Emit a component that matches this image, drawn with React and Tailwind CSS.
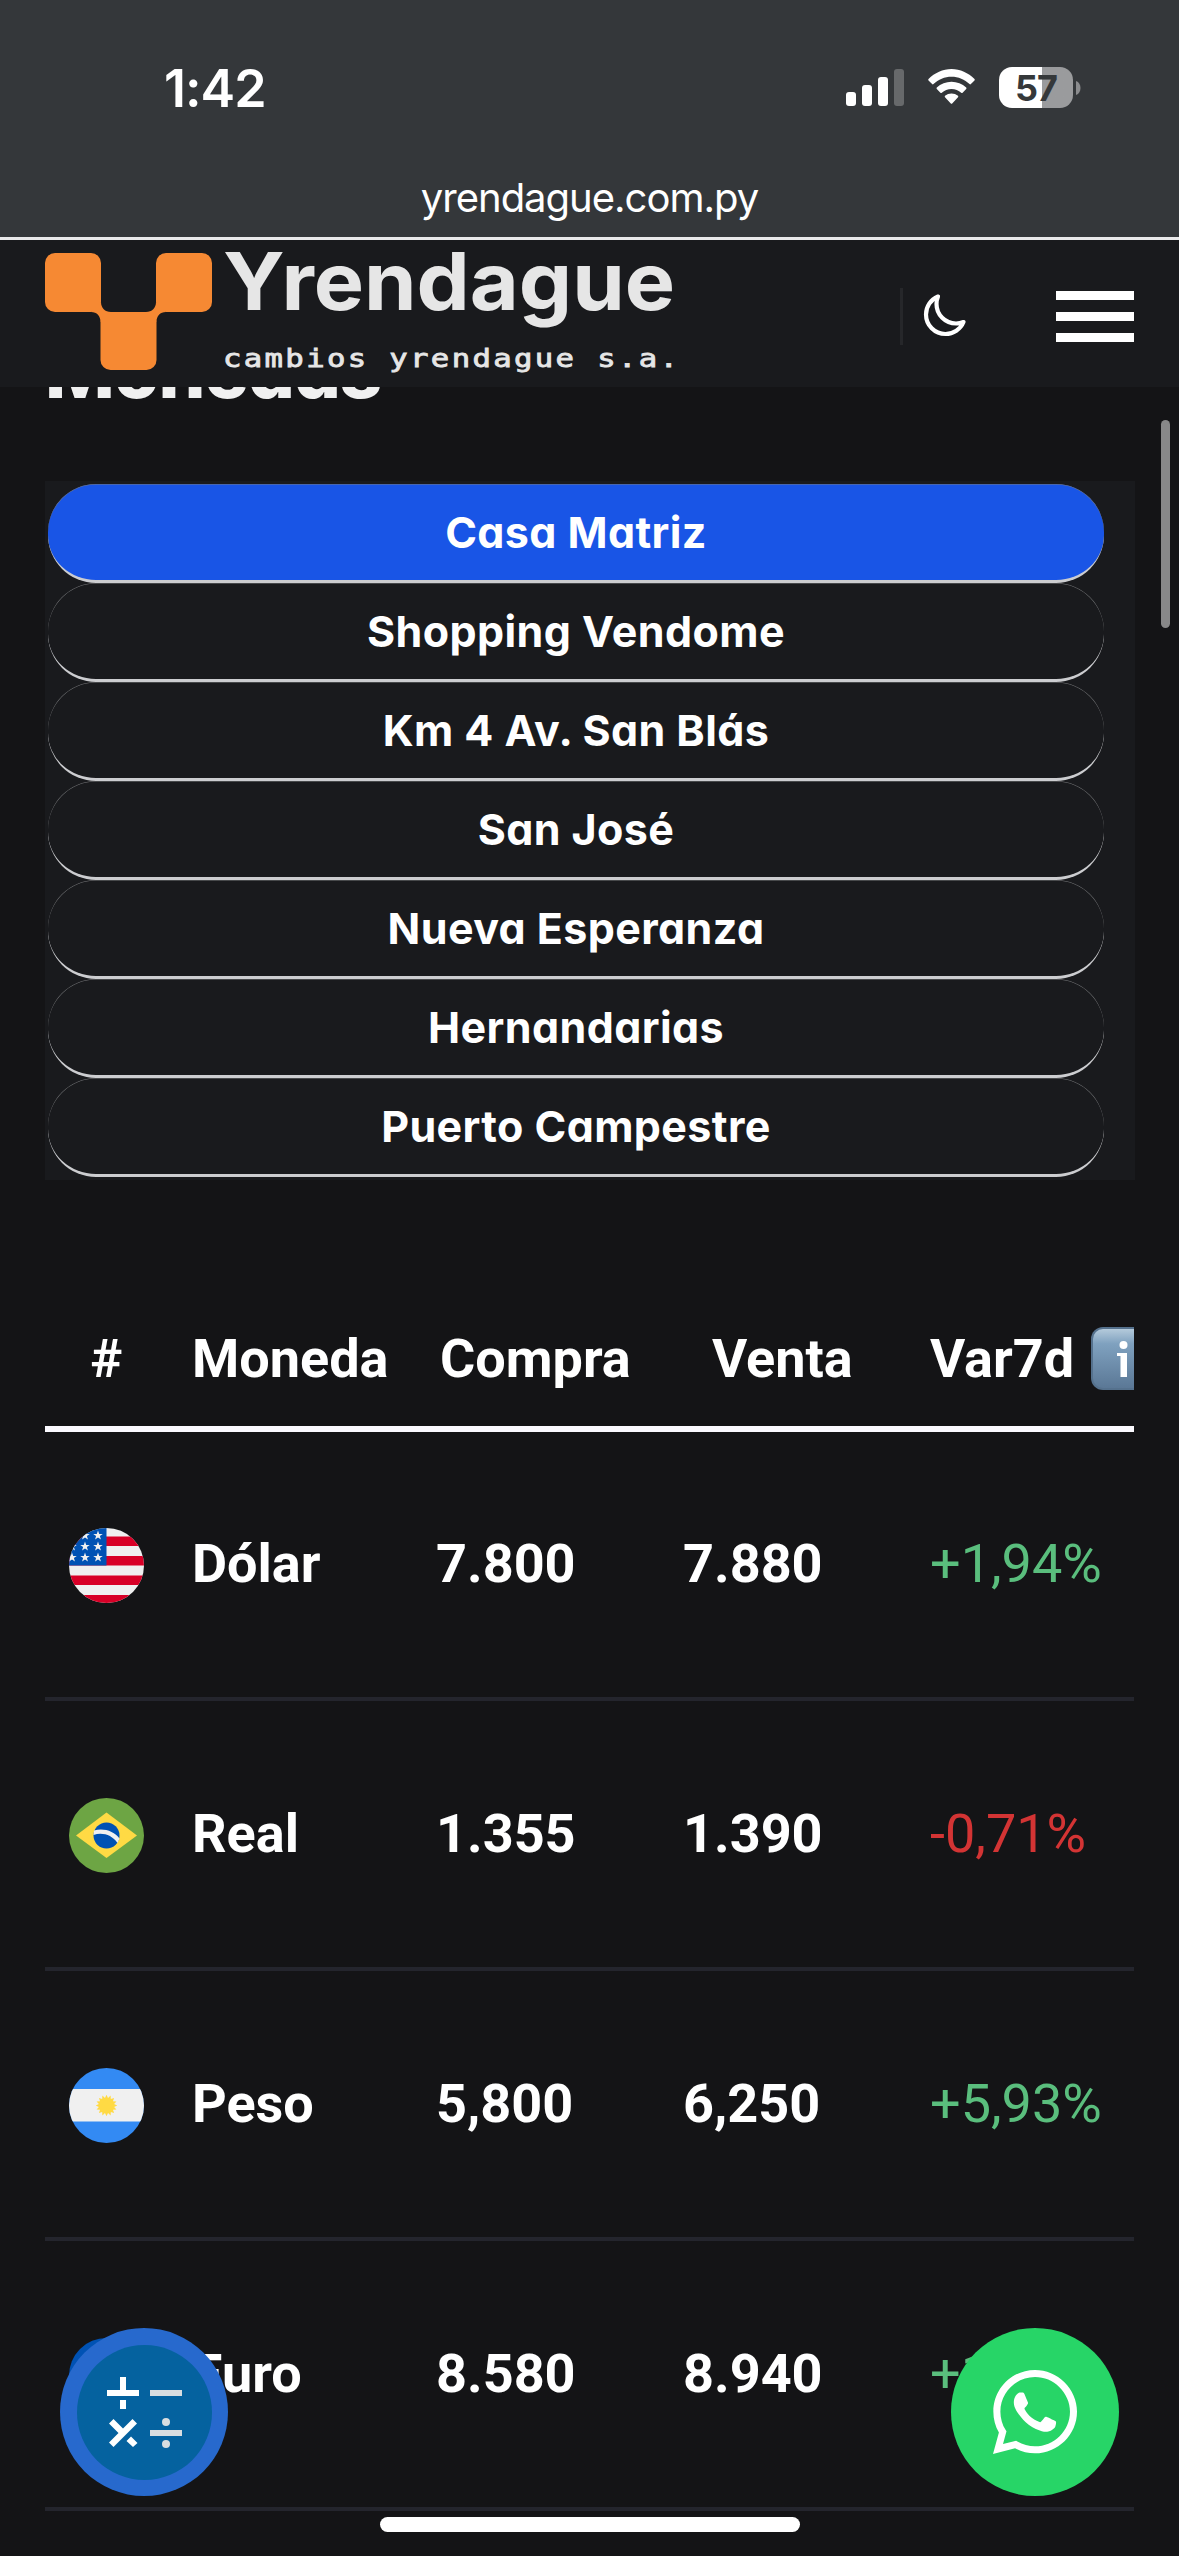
import React from "react";
import { FaWhatsapp } from "react-icons/fa";

const branches = [
  "Casa Matriz",
  "Shopping Vendome",
  "Km 4 Av. San Blás",
  "San José",
  "Nueva Esperanza",
  "Hernandarias",
  "Puerto Campestre",
];

const rates = [
  { flag: UsaFlag, name: "Dólar", buy: "7.800", sell: "7.880", change: "+1,94%" },
  { flag: BrazilFlag, name: "Real", buy: "1.355", sell: "1.390", change: "-0,71%" },
  { flag: ArgentinaFlag, name: "Peso", buy: "5,800", sell: "6,250", change: "+5,93%" },
  { flag: EuroFlag, name: "Euro", buy: "8.580", sell: "8.940", change: "+1,15%" },
];

const STAR = "M0-10 2.4-3.1 9.5-3.1 3.8 1.2 5.9 8.1 0 3.9-5.9 8.1-3.8 1.2-9.5-3.1-2.4-3.1Z";

// Sixteen-rayed sun, alternating outer and inner radius around the flag's centre.
const SUN = Array.from({ length: 32 }, (_, i) => {
  const angle = (i * Math.PI) / 16;
  const radius = i % 2 ? 15.5 : 21.5;
  return `${75 + radius * Math.sin(angle)},${75 - radius * Math.cos(angle)}`;
}).join(" ");

function FlagCircle({ id, children }) {
  return (
    <svg viewBox="0 0 150 150" className="size-[75px]">
      <clipPath id={id}>
        <circle cx="75" cy="75" r="75" />
      </clipPath>
      <g clipPath={`url(#${id})`}>{children}</g>
    </svg>
  );
}

function UsaFlag() {
  return (
    <FlagCircle id="usa">
      <rect width="150" height="150" fill="#f0f0f0" />
      {[17, 56, 95, 134].map((y) => (
        <rect key={y} y={y} width="150" height="19" fill="#d80027" />
      ))}
      <rect width="75" height="75" fill="#0052b4" />
      {[15, 37, 59].map((y) =>
        [6, 32, 58].map((x) => (
          <path key={x + "-" + y} d={STAR} transform={`translate(${x} ${y})`} fill="#f0f0f0" />
        ))
      )}
    </FlagCircle>
  );
}

function BrazilFlag() {
  return (
    <FlagCircle id="brazil">
      <rect width="150" height="150" fill="#6da544" />
      <path d="M75 29 136 75 75 120 14 75Z" fill="#ffda44" />
      <circle cx="75" cy="75" r="26" fill="#0052b4" />
      <path d="M49 74c18-6 37 0 48 16l4-9C91 66 68 59 50 65Z" fill="#f0f0f0" />
    </FlagCircle>
  );
}

function ArgentinaFlag() {
  return (
    <FlagCircle id="argentina">
      <rect width="150" height="150" fill="#338af3" />
      <rect y="42" width="150" height="65" fill="#f0f0f0" />
      <polygon points={SUN} fill="#ffda44" />
    </FlagCircle>
  );
}

function EuroFlag() {
  return (
    <FlagCircle id="euro">
      <rect width="150" height="150" fill="#0052b4" />
    </FlagCircle>
  );
}

function StatusBar() {
  return (
    <div className="flex h-[240px] flex-col border-b-3 border-[#e9e9ea] bg-[#34373a] text-white">
      <div className="flex h-[175px] shrink-0 items-center justify-between pl-[164px] pr-[98px]">
        <span className="pt-0.5 text-[52px] leading-none font-semibold tracking-[-1px]">1:42</span>
        <div className="flex items-center">
          <svg viewBox="0 0 58 37" className="h-[37px] w-[58px]" fill="#fff">
            <rect x="0" y="23" width="10" height="14" rx="3" />
            <rect x="16" y="16" width="10" height="21" rx="3" />
            <rect x="32" y="8" width="10" height="29" rx="3" />
            <rect x="48" y="0" width="10" height="37" rx="3" fillOpacity=".25" />
          </svg>
          <svg viewBox="0 0 51 37" className="ml-[22px] h-[37px] w-[51px]" fill="#fff">
            <path d="M25.5 7.8c6.8 0 13.200 2.600 18 7.300.4.400 1 .400 1.400 0l3.600-3.600c.4-.4.4-1 0-1.400C42.300 3.800 34.200 0 25.500 0S8.700 3.800 2.500 10.100c-.4.400-.4 1 0 1.400l3.600 3.600c.4.400 1 .4 1.400 0 4.800-4.700 11.200-7.300 18-7.300Z" />
            <path d="M25.500 20c3.700 0 7.100 1.400 9.700 3.700.4.400 1 .4 1.400 0l3.600-3.700c.4-.4.4-1 0-1.400a21.500 21.500 0 0 0-29.400 0c-.4.400-.4 1 0 1.400l3.600 3.700c.4.400 1 .4 1.400 0 2.600-2.300 6-3.700 9.700-3.700Z" />
            <path d="M32 28.200c.4-.4.4-1 0-1.400a10.300 10.300 0 0 0-13 0c-.4.400-.4 1 0 1.400l5.800 6.300c.4.400 1 .4 1.400 0Z" />
          </svg>
          <div className="ml-[22px] flex h-[41px] w-[74px] items-center justify-center rounded-[13px] bg-gradient-to-r from-white from-[58%] to-[#9a9b9d] to-[58%]">
            <span className="text-[36px] leading-none font-bold tracking-[-1px] text-[#35383a]">57</span>
          </div>
          <svg viewBox="0 0 5 14" className="ml-[3px] h-[14px] w-[5px]">
            <path d="M0 0c6 2 6 12 0 14Z" fill="#8b8c8e" />
          </svg>
        </div>
      </div>
      <div className="flex h-[46px] items-center justify-center text-[40px] leading-none tracking-[-1px]">
        yrendague.com.py
      </div>
    </div>
  );
}

function Logo() {
  return (
    <svg viewBox="0 0 640 147" className="ml-[45px] h-[147px] w-[640px] overflow-visible">
      <g fill="#f68933">
        <rect x="0" y="13" width="56" height="59" rx="10" />
        <rect x="111" y="13" width="56" height="59" rx="10" />
        <rect x="55.500" y="72" width="56" height="58" rx="10" />
        <path d="M46 72c6 0 9.500 4 9.500 10L66 72c-6 0-10-4-10-10ZM121 72c-6 0-9.500 4-9.500 10L101 72c6 0 10-4 10-10Z" />
        <path d="M56 72h55v10H56Z" />
      </g>
      <g fill="#e6e6e6">
        <text
          x="178"
          y="70"
          fontSize="80"
          fontWeight="700"
          textLength="452"
          lengthAdjust="spacingAndGlyphs"
          fontFamily="Inter, sans-serif"
        >
          Yrendague
        </text>
        <g transform="translate(178 127) scale(1.25 1)">
          <text
            fontSize="24.500"
            textLength="364"
            fontFamily="DejaVu Sans Mono, monospace"
            stroke="#e6e6e6"
            strokeWidth=".8"
          >
            cambios yrendague s.a.
          </text>
        </g>
      </g>
    </svg>
  );
}

function Header() {
  return (
    <header className="relative z-10 flex h-[147px] items-center bg-[#191a1d]">
      <Logo />
      <div className="ml-auto flex items-center pt-[5px] pr-[45px]">
        <div className="h-[57px] w-[3px] bg-[#26272a]" />
        <svg
          viewBox="0 0 24 24"
          className="mr-[88px] ml-[17px] size-[48px]"
          fill="none"
          stroke="#fff"
          strokeWidth="2.100"
          strokeLinecap="round"
          strokeLinejoin="round"
        >
          <path d="M21.752 15.002A9.720 9.720 0 0 1 18 15.750c-5.385 0-9.750-4.365-9.750-9.750 0-1.330.266-2.597.748-3.752A9.753 9.753 0 0 0 3 11.250C3 16.635 7.365 21 12.750 21a9.753 9.753 0 0 0 9.002-5.998Z" />
        </svg>
        <div className="flex flex-col gap-3">
          <div className="h-[9px] w-[78px] bg-white" />
          <div className="h-[9px] w-[78px] bg-white" />
          <div className="h-[9px] w-[78px] bg-white" />
        </div>
      </div>
    </header>
  );
}

function InfoBadge() {
  return (
    <svg viewBox="0 0 63 63" className="ml-[17px] h-[63px] w-[63px] shrink-0">
      <defs>
        <linearGradient id="badge" x1="0" y1="0" x2="0" y2="1">
          <stop offset="0" stopColor="#b4cadb" />
          <stop offset=".25" stopColor="#7fa1bf" />
          <stop offset="1" stopColor="#5b7896" />
        </linearGradient>
      </defs>
      <rect width="63" height="63" rx="12" fill="#55718d" />
      <rect x="2" y="2" width="61" height="59" rx="10" fill="url(#badge)" />
      <circle cx="32.500" cy="18" r="4" fill="#fff" />
      <path d="M26 26h10v24h-6.500V29H26Z" fill="#fff" />
    </svg>
  );
}

function CalculatorIcon() {
  return (
    <svg viewBox="0 0 135 135" className="size-[135px]">
      <circle cx="67.500" cy="67.500" r="67.500" fill="#05629f" />
      <g fill="#fff">
        <path d="M43 32h6v13h13v6H30v-6h13ZM43 55h6v9h-6Z" />
        <path d="M32 78.500 36.500 74 46 83.500 55.500 74 60 78.500 36.500 102 32 97.500 41.500 88ZM49.500 96 54 91.500 60.500 98 56 102Z" />
      </g>
      <g fill="#d9dde0">
        <rect x="73" y="45" width="32" height="6" />
        <rect x="73" y="85" width="32" height="6" />
        <circle cx="89" cy="77" r="4" />
        <circle cx="89" cy="99" r="4" />
      </g>
    </svg>
  );
}

const columns = "grid grid-cols-[147px_244px_247px_247px_1fr]";

export default function App() {
  return (
    <div className="relative h-[2556px] w-[1179px] overflow-hidden bg-[#141416] font-[Inter,sans-serif] text-white">
      <StatusBar />
      <Header />

      <h2 className="-mt-[61px] pl-[45px] text-[74px] leading-[90px] font-extrabold tracking-[-1.1px] text-[#f0f0f0] [font-feature-settings:'cv11']">
        Monedas
      </h2>

      <div className="mt-[65px] mr-11 ml-[45px] bg-[#191a1d] py-[3px] pr-[31px] pl-[3px]">
        {branches.map((name, i) => (
          <button
            key={name}
            className={
              "flex h-[99px] w-full items-center justify-center rounded-[48px] border-b-3 border-[#cccdd0] text-[43px] leading-none font-bold tracking-[0.4px] shadow-[inset_0_0.6px_0_0_#77787a] [font-feature-settings:'cv11'] " +
              (i === 0 ? "bg-[#1955e6]" : "")
            }
          >
            {name}
          </button>
        ))}
      </div>

      <div className="mr-[45px] ml-[45px] overflow-hidden font-[Roboto,sans-serif] text-[54px]">
        <div className={columns + " mt-[110px] h-[142px] items-center border-b-6 border-[#fbfaff] pt-px font-bold"}>
          <span className="pl-[45px] font-semibold">#</span>
          <span>Moneda</span>
          <span className="pl-1">Compra</span>
          <span className="pl-[29px]">Venta</span>
          <span className="flex items-center">
            Var7d
            <InfoBadge />
          </span>
        </div>
        {rates.map(({ flag: Flag, name, buy, sell, change }, i) => (
          <div
            key={name}
            className={
              columns +
              " items-center border-b-4 border-[#24252d] font-bold " +
              (i === 0 ? "h-[269px]" : "h-[270px]")
            }
          >
            <span className="pt-0.5 pl-6">
              <Flag />
            </span>
            <span className="pb-0.5">{name}</span>
            <span className="pb-0.5">{buy}</span>
            <span className="pb-0.5">{sell}</span>
            <span className={"pb-0.5 font-normal " + (change[0] === "+" ? "text-[#5abe7d]" : "text-[#d33434]")}>
              {change}
            </span>
          </div>
        ))}
      </div>

      <div className="absolute top-[420px] right-[9px] h-[208px] w-[9px] rounded-full bg-[#888889]" />
      <button className="absolute top-[2328px] left-[60px] flex size-[168px] items-center justify-center rounded-full bg-[#2769cd]">
        <CalculatorIcon />
      </button>
      <button className="absolute top-[2328px] left-[951px] flex size-[168px] items-center justify-center rounded-full bg-[#27d567]">
        <FaWhatsapp className="size-24" />
      </button>
      <div className="absolute top-[2517px] left-[380px] h-[15px] w-[420px] rounded-full bg-white" />
    </div>
  );
}
